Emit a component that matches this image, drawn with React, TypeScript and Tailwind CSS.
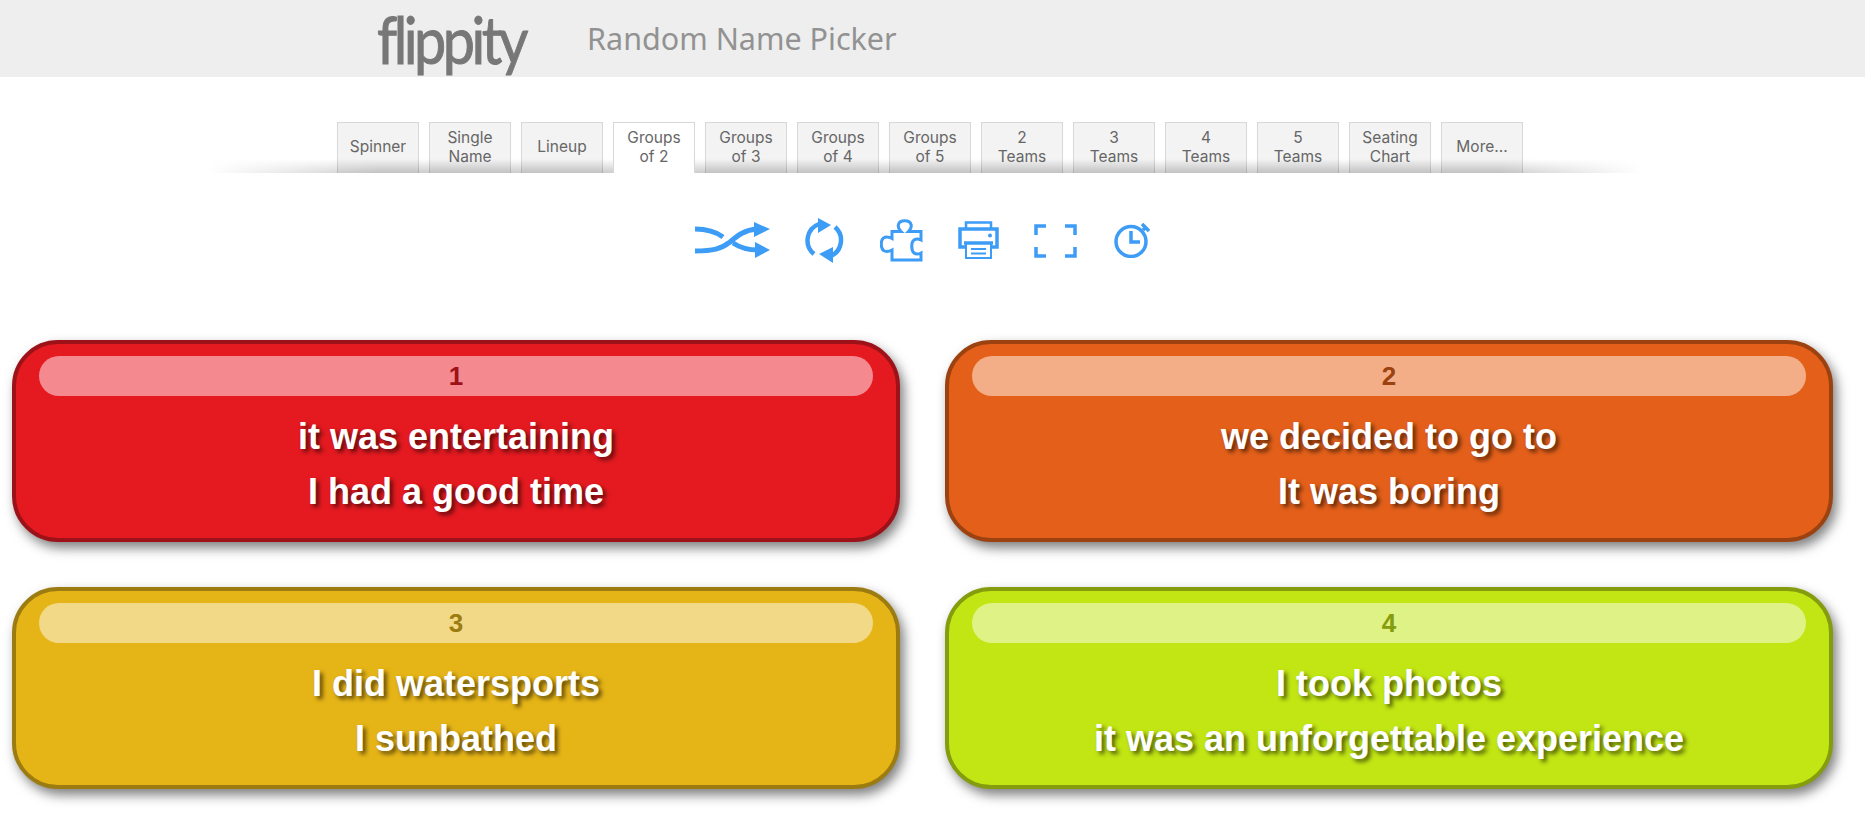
const tabs = [
  ['Spinner'],
  ['Single', 'Name'],
  ['Lineup'],
  ['Groups', 'of 2'],
  ['Groups', 'of 3'],
  ['Groups', 'of 4'],
  ['Groups', 'of 5'],
  ['2', 'Teams'],
  ['3', 'Teams'],
  ['4', 'Teams'],
  ['5', 'Teams'],
  ['Seating', 'Chart'],
  ['More...'],
];

const groups = [
  {
    id: 1,
    lines: ['it was entertaining', 'I had a good time'],
    card: 'bg-[#e41a20] border-[#9c1218]',
    pill: 'bg-[#f48a90] text-[#9c1218]',
  },
  {
    id: 2,
    lines: ['we decided to go to', 'It was boring'],
    card: 'bg-[#e4601a] border-[#9c4211]',
    pill: 'bg-[#f3ae88] text-[#9c4211]',
  },
  {
    id: 3,
    lines: ['I did watersports', 'I sunbathed'],
    card: 'bg-[#e5b417] border-[#9c7b10]',
    pill: 'bg-[#f2d987] text-[#9c7b10]',
  },
  {
    id: 4,
    lines: ['I took photos', 'it was an unforgettable experience'],
    card: 'bg-[#c1e614] border-[#849c0e]',
    pill: 'bg-[#dff285] text-[#849c0e]',
  },
];

function Toolbar() {
  return (
    <div className="mt-[44px] flex h-[46px] items-center text-[#3d9cf5]">
      {/* shuffle */}
      <svg className="ml-[695px] h-[37px] w-[75px]" viewBox="0 0 75 37" fill="none" stroke="currentColor" strokeWidth="5">
        <path d="M0 7c12 0 20 2 28 8M0 29c18 0 26-2 35-9 8-7 15-12 27-13M38 21c6 4 14 7 25 7" />
        <path d="M59 0l16 7-16 8zM60 20l15 8-15 8z" fill="currentColor" stroke="none" />
      </svg>
      {/* refresh */}
      <svg className="ml-[35px] h-[45px] w-[41px]" viewBox="0 0 41 45" fill="none" stroke="currentColor" strokeWidth="4.500">
        <path d="M9 36A17.500 17.500 0 0 1 14 6M30 9A17.500 17.500 0 0 1 26 38" />
        <path d="M13 0l13 7-13 8zM14 36l14-7v16z" fill="currentColor" stroke="none" />
      </svg>
      {/* puzzle piece */}
      <svg className="ml-[34px] h-[43px] w-[43px]" viewBox="0 0 43 43" fill="none" stroke="currentColor" strokeWidth="3">
        <path d="M12 41V31c-3 1.500-6 2-8.500.5C.5 29 .5 21 3.500 19c2.500-1.500 5.500-1 8.500.5v-7h9c-2-2-3.500-4-2.500-7C19.500.5 30 .5 31 5.500c1 3-.5 5-2.500 7h12.500V21c-3-1.500-5-1.500-7 0-3 2-3 10 0 13 2 1.500 4 1.500 7 0v7z" />
      </svg>
      {/* printer */}
      <svg className="ml-[35px] h-[38px] w-[41px]" viewBox="0 0 41 38" fill="none" stroke="currentColor" strokeWidth="2.500">
        <path d="M8 8V1.500h25V8" />
        <path d="M8 26H2V8h37v18h-6" strokeWidth="3.500" />
        <path d="M6 22h29" strokeWidth="3.500" />
        <path d="M8 22h25v15H8zM13 28h15M13 32.500h15" strokeWidth="2" />
        <circle cx="32" cy="14.500" r="2" fill="currentColor" stroke="none" />
      </svg>
      {/* fullscreen corners */}
      <svg className="ml-[35px] mt-[2px] h-[34px] w-[43px]" viewBox="0 0 43 34" fill="none" stroke="currentColor" strokeWidth="3.500">
        <path d="M2 11V2h10M31 2h10v9M2 23v9h10M31 32h10v-9" />
      </svg>
      {/* timer */}
      <svg className="ml-[36px] h-[36px] w-[37px]" viewBox="0 0 37 36" fill="none" stroke="currentColor" strokeWidth="3.500">
        <circle cx="18" cy="19.500" r="15" />
        <path d="M18 9v11h9" />
        <path d="M29 2l7 7M30 8l2-2" />
      </svg>
    </div>
  );
}

export default function App() {
  return (
    <div className="min-h-[819px] overflow-hidden bg-white font-['Noto_Sans',sans-serif]">
      <header className="flex h-[77px] items-center bg-[#eeeeee] pl-[377px]">
        <span className="origin-left scale-x-[0.87] whitespace-nowrap font-['Lato',sans-serif] text-[66px] leading-[76px] tracking-[-4px] text-[#777777] [-webkit-text-stroke:1px_#777777]">
          flippity
        </span>
        <span className="ml-[40px] text-[30.5px] text-[#929292]">Random Name Picker</span>
      </header>

      <nav className="relative ml-[208px] mt-[45px] flex w-[1433px] gap-[10px] pl-[129px]">
        {tabs.map((lines, i) => (
          <div
            key={i}
            className={`flex h-[51px] w-[82px] items-center justify-center border border-b-0 border-[#d8d8d8] pb-[3px] text-center font-['Inter',sans-serif] text-[15.5px] leading-[19px] text-[#666666] ${
              i === 3 ? 'relative z-10 bg-white' : 'bg-[#f3f3f3]'
            }`}
          >
            <div>
              {lines[0]}
              {lines[1] && <br />}
              {lines[1]}
            </div>
          </div>
        ))}
        <div className="pointer-events-none absolute bottom-0 left-0 h-[14px] w-full bg-gradient-to-t from-black/20 to-transparent [mask-image:linear-gradient(to_right,transparent,black_12%,black_90%,transparent)]" />
      </nav>

      <Toolbar />

      <main className="mt-[77px] grid grid-cols-[888px_888px] gap-x-[45px] gap-y-[45px] pl-[12px]">
        {groups.map((g) => (
          <section
            key={g.id}
            className={`h-[202px] rounded-[46px] border-[4px] px-[23px] pt-[12px] text-center font-['Liberation_Sans',sans-serif] font-bold shadow-[4px_6px_12px_rgba(0,0,0,0.5)] ${g.card}`}
          >
            <div className={`h-[40px] rounded-[20px] text-[26px] leading-[40px] ${g.pill}`}>{g.id}</div>
            <div className="mt-[13px] text-[36px] leading-[55px] text-white [text-shadow:3px_3px_4px_rgba(0,0,0,0.6)]">
              {g.lines[0]}
              <br />
              {g.lines[1]}
            </div>
          </section>
        ))}
      </main>
    </div>
  );
}
